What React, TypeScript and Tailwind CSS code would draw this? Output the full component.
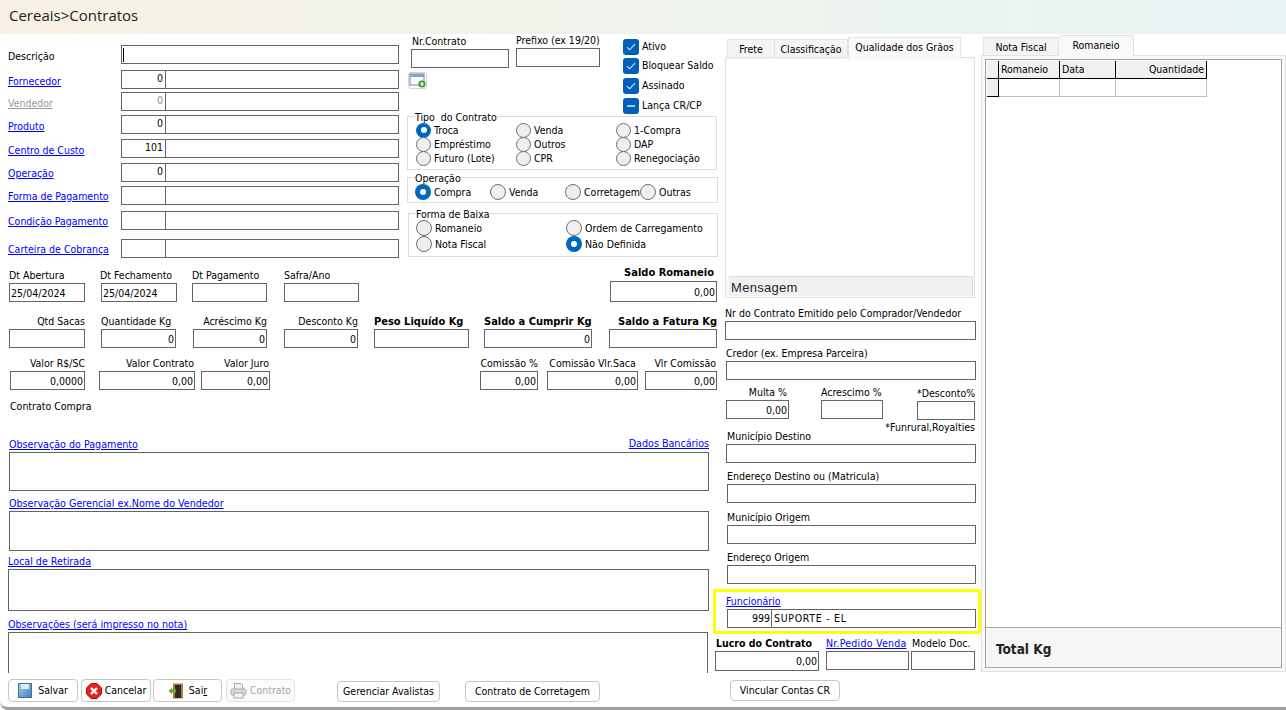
import React from "react";

const cx = (...a: (string | false | undefined)[]) => a.filter(Boolean).join(" ");
const Txt = "whitespace-nowrap";
const Bold = "font-bold text-[11px] !leading-[16px]";

function Box({ className, value, left }: { className?: string; value?: string; left?: boolean }) {
  return (
    <div className={cx("border border-[#646464] bg-white flex items-center px-[1px] leading-[14px] overflow-hidden", left ? "justify-start" : "justify-end", className)}>
      {value}
    </div>
  );
}

function Field({ label, w, value, lab, boxH = "h-[19px]", left, className, link }: { label: string; w: string; value?: string; lab?: string; boxH?: string; left?: boolean; className?: string; link?: boolean }) {
  return (
    <div className={cx("flex flex-col shrink-0", w, className)}>
      <div className={cx("h-[14px] leading-[14px] mb-[1px]", Txt, link && "text-[#0000ff] underline", lab)}>{label}</div>
      <Box className={boxH} value={value} left={left} />
    </div>
  );
}

function Lookup({ label, code, name, gray, className, labelClass }: { label: string; code?: string; name?: string; gray?: boolean; className?: string; labelClass?: string }) {
  return (
    <div className={cx("flex items-center h-[19px]", className)}>
      <div className={cx("w-[113px] shrink-0 underline", Txt, gray ? "text-[#9a9a9a]" : "text-[#0000ff]", labelClass)}>{label}</div>
      <div className="flex w-[278px] h-[19px] border border-[#646464] bg-white">
        <div className={cx("w-[44px] border-r border-[#646464] text-right pr-[2px] leading-[15px]", gray && "text-[#8a8a8a]")}>{code}</div>
        <div className="flex-1 px-[1px] leading-[15px]">{name}</div>
      </div>
    </div>
  );
}

function Radio({ on, small }: { on?: boolean; small?: boolean }) {
  const size = small ? "w-[15px] h-[15px]" : "w-[16px] h-[16px]";
  if (on)
    return (
      <span className={cx("rounded-full bg-[#0067c0] flex items-center justify-center shrink-0", size)}>
        <span className="w-[6px] h-[6px] rounded-full bg-white" />
      </span>
    );
  return <span className={cx("rounded-full bg-[#efefef] border border-[#6e6e6e] shrink-0", size)} />;
}

function RadioItem({ on, label, w, small }: { on?: boolean; label: string; w: string; small?: boolean }) {
  return (
    <div className={cx("flex items-center gap-[3px]", w)}>
      <Radio on={on} small={small} />
      <span className={cx(Txt, "pt-[2px]")}>{label}</span>
    </div>
  );
}

function Check({ label, dash, className }: { label: string; dash?: boolean; className?: string }) {
  return (
    <div className={cx("flex items-center gap-[3px] h-[16px]", className)}>
      <span className="w-[16px] h-[16px] rounded-[3px] bg-[#0060b8] flex items-center justify-center">
        {dash ? (
          <span className="w-[8px] h-[2px] bg-[#a9c9ea]" />
        ) : (
          <svg width="10" height="8" viewBox="0 0 10 8" fill="none">
            <path d="M1 4.2 L3.6 6.8 L9 1.2" stroke="#dbe9f7" strokeWidth="1.1" />
          </svg>
        )}
      </span>
      <span className={Txt}>{label}</span>
    </div>
  );
}

function Group({ title, className, children }: { title: string; className?: string; children: React.ReactNode }) {
  return (
    <fieldset className={cx("border border-[#dcdcdc] min-w-0", className)}>
      <legend className="ml-[7px] leading-[16px] h-[14px]">{title}</legend>
      {children}
    </fieldset>
  );
}

function Btn({ children, className, disabled }: { children: React.ReactNode; className?: string; disabled?: boolean }) {
  return (
    <div className={cx("border rounded-[4px] flex items-center justify-center shrink-0", Txt, disabled ? "border-[#e2e2e2] text-[#a8a8a8] bg-[#fbfbfb]" : "border-[#c6c6c6] bg-white", className)}>
      {children}
    </div>
  );
}

function ObsBlock({ label, className, boxClass, right }: { label: string; className?: string; boxClass: string; right?: string }) {
  return (
    <div className={cx("flex flex-col", className)}>
      <div className="flex justify-between h-[14px] leading-[16px] mb-[1px] text-[#0000ff] underline text-[10.65px]">
        <span className={Txt}>{label}</span>
        {right && <span className={cx(Txt, "-mt-[1px]")}>{right}</span>}
      </div>
      <div className={cx("border border-[#646464] bg-white", boxClass)} />
    </div>
  );
}

function Floppy() {
  return (
    <svg width="14" height="15" viewBox="0 0 14 15">
      <defs>
        <linearGradient id="fl" x1="0" y1="0" x2="1" y2="1">
          <stop offset="0" stopColor="#a9cdf0" />
          <stop offset="1" stopColor="#3f7fc0" />
        </linearGradient>
      </defs>
      <rect x="0.5" y="0.5" width="13" height="14" fill="url(#fl)" stroke="#3d6fa3" />
      <rect x="3" y="1" width="8" height="5" fill="#dfeaf6" />
    </svg>
  );
}

function CancelIcon() {
  return (
    <svg width="16" height="16" viewBox="0 0 16 16">
      <path d="M5 0.5 H11 L15.5 5 V11 L11 15.5 H5 L0.5 11 V5 Z" fill="#e52222" stroke="#b01010" />
      <path d="M5 5 L11 11 M11 5 L5 11" stroke="#fff" strokeWidth="2.4" />
    </svg>
  );
}

function DoorIcon() {
  return (
    <svg width="16" height="16" viewBox="0 0 16 16">
      <rect x="5" y="0.5" width="10" height="15" fill="#a9803f" />
      <rect x="7" y="2" width="6" height="13" fill="#2d2a26" />
      <path d="M0.5 8 L4 4.8 V6.6 H8 V9.4 H4 V11.2 Z" fill="#6aa531" />
    </svg>
  );
}

function PrinterIcon() {
  return (
    <svg width="17" height="17" viewBox="0 0 17 17" fill="none" stroke="#a9a9a9">
      <path d="M4.5 7 V1.5 H11 L12.5 3 V7" fill="#f2f2f2" />
      <rect x="1" y="7" width="15" height="6" rx="1.5" fill="#d9d9d9" />
      <rect x="4" y="11" width="9" height="5" fill="#f5f5f5" />
    </svg>
  );
}

function AddWindowIcon() {
  return (
    <div className="w-[19px] h-[17px] border border-[#d3d3d3] rounded-[3px] flex items-center justify-center">
      <svg width="17" height="15" viewBox="0 0 17 15">
        <rect x="1" y="1" width="14" height="11" fill="#fff" stroke="#5d87ba" />
        <rect x="1" y="1" width="14" height="3" fill="#7da6d6" />
        <circle cx="13" cy="11" r="3.6" fill="#3d9a35" />
        <path d="M13 9 V13 M11 11 H15" stroke="#fff" strokeWidth="1.2" />
      </svg>
    </div>
  );
}

const Head = "bg-[#f0f0f0] border-r border-b border-black h-[18px] leading-[17px] px-[2px]";
const Cell = "border-r border-b border-[#c0c0c0] h-[18px]";

export default function App() {
  return (
    <div className="w-[1286px] h-[710px] overflow-hidden bg-white flex flex-col font-['DejaVu_Sans_Condensed','Liberation_Sans',sans-serif] text-[10.5px] text-black">
      <header className="h-[34px] shrink-0 flex items-center pl-[9px] bg-gradient-to-r from-[#f8f2e3] to-[#e6f4f4] text-[15px] text-[#222] font-['Open_Sans',sans-serif] pb-[3px]">
        Cereais&gt;Contratos
      </header>

      <main className="flex h-[639px] shrink-0 overflow-hidden">
        {/* Left */}
        <section className="w-[720px] shrink-0 flex flex-col">
          <div className="flex h-[228px] shrink-0">
            <div className="w-[400px] shrink-0 pl-[8px] pt-[11px] flex flex-col">
              <div className="flex items-center h-[19px]">
                <div className="w-[113px] shrink-0 mt-[4px]">Descrição</div>
                <div className="w-[278px] h-[19px] border border-[#646464] flex items-center pl-[1px]">
                  <span className="w-[1px] h-[14px] bg-black" />
                </div>
              </div>
              <Lookup className="mt-[6px]" labelClass="mt-[4px]" label="Fornecedor" code="0" />
              <Lookup className="mt-[3px]" labelClass="mt-[4px]" label="Vendedor" code="0" gray />
              <Lookup className="mt-[4px]" labelClass="mt-[5px]" label="Produto" code="0" />
              <Lookup className="mt-[5px]" labelClass="mt-[4px]" label="Centro de Custo" code="101" />
              <Lookup className="mt-[5px]" labelClass="mt-[2px]" label="Operação" code="0" />
              <Lookup className="mt-[4px]" labelClass="mt-[2px]" label="Forma de Pagamento" />
              <Lookup className="mt-[6px]" labelClass="mt-[2px]" label="Condição Pagamento" />
              <Lookup className="mt-[9px]" labelClass="mt-[2px]" label="Carteira de Cobrança" />
            </div>

            <div className="flex-1 flex flex-col">
              <div className="flex h-[75px] shrink-0">
                <div className="w-[223px] shrink-0 flex flex-col">
                  <div className="flex">
                    <div className="flex flex-col ml-[11px] w-[98px]">
                      <div className="h-[14px] leading-[14px] mb-[1px] ml-[1px]">Nr.Contrato</div>
                      <div className="h-[19px] border border-[#646464]" />
                    </div>
                    <div className="flex flex-col ml-[7px] w-[84px] -mt-[1px]">
                      <div className={cx("h-[14px] leading-[14px] mb-[1px]", Txt)}>Prefixo (ex 19/20)</div>
                      <div className="h-[19px] border border-[#646464]" />
                    </div>
                  </div>
                  <div className="ml-[8px] mt-[4px]">
                    <AddWindowIcon />
                  </div>
                </div>
                <div className="flex flex-col pt-[5px]">
                  <Check label="Ativo" />
                  <Check className="mt-[3px]" label="Bloquear Saldo" />
                  <Check className="mt-[4px]" label="Assinado" />
                  <Check className="mt-[4px]" label="Lança CR/CP" dash />
                </div>
              </div>

              <Group title="Tipo  do Contrato" className="ml-[7px] w-[310px] h-[61px] whitespace-pre">
                <div className="grid grid-cols-[100px_100px_100px] pl-[8px] auto-rows-[14px] items-center">
                  <RadioItem on label="Troca" w="" small />
                  <RadioItem label="Venda" w="" small />
                  <RadioItem label="1-Compra" w="" small />
                  <RadioItem label="Empréstimo" w="" small />
                  <RadioItem label="Outros" w="" small />
                  <RadioItem label="DAP" w="" small />
                  <RadioItem label="Futuro (Lote)" w="" small />
                  <RadioItem label="CPR" w="" small />
                  <RadioItem label="Renegociação" w="" small />
                </div>
              </Group>
              <Group title="Operação" className="ml-[7px] w-[311px] h-[33px]">
                <div className="flex pl-[7px] h-[16px]">
                  <RadioItem on label="Compra" w="w-[75px]" />
                  <RadioItem label="Venda" w="w-[75px]" />
                  <RadioItem label="Corretagem" w="w-[75px]" />
                  <RadioItem label="Outras" w="" />
                </div>
              </Group>
              <Group title="Forma de Baixa" className="ml-[8px] mt-[3px] w-[310px] h-[51px]">
                <div className="grid grid-cols-[150px_150px] pl-[7px] auto-rows-[16px]">
                  <RadioItem label="Romaneio" w="" />
                  <RadioItem label="Ordem de Carregamento" w="" />
                  <RadioItem label="Nota Fiscal" w="" />
                  <RadioItem on label="Não Definida" w="" />
                </div>
              </Group>
            </div>
          </div>

          <div className="flex items-end mt-[3px] h-[37px] shrink-0">
            <Field className="ml-[9px]" label="Dt Abertura" w="w-[76px]" value="25/04/2024" left />
            <Field className="ml-[16px]" label="Dt Fechamento" w="w-[76px]" value="25/04/2024" left lab="-ml-[1px]" />
            <Field className="ml-[15px]" label="Dt Pagamento" w="w-[75px]" />
            <Field className="ml-[17px]" label="Safra/Ano" w="w-[75px]" />
            <div className="flex flex-col ml-[251px] w-[107px]">
              <div className={cx("h-[14px] mb-[2px] text-right pr-[3px]", Bold)}>Saldo Romaneio</div>
              <Box className="h-[21px]" value="0,00" />
            </div>
          </div>

          <div className="flex items-end mt-[12px] shrink-0">
            <Field className="ml-[9px]" label="Qtd Sacas" w="w-[76px]" lab="text-right" />
            <Field className="ml-[16px]" label="Quantidade Kg" w="w-[75px]" value="0" />
            <Field className="ml-[17px]" label="Acréscimo Kg" w="w-[74px]" value="0" lab="text-right" />
            <Field className="ml-[17px]" label="Desconto Kg" w="w-[74px]" value="0" lab="text-right" />
            <Field className="ml-[16px]" label="Peso Liquído Kg" w="w-[95px]" lab={Bold} />
            <Field className="ml-[15px]" label="Saldo a Cumprir Kg" w="w-[108px]" value="0" lab={Bold} />
            <Field className="ml-[17px]" label="Saldo a Fatura Kg" w="w-[108px]" lab={cx(Bold, "text-right")} />
          </div>

          <div className="flex items-end mt-[8px] shrink-0">
            <Field className="ml-[10px]" label="Valor R$/SC" w="w-[75px]" value="0,0000" lab="text-right" />
            <Field className="ml-[14px]" label="Valor Contrato" w="w-[96px]" value="0,00" lab="text-right pr-[1px]" />
            <Field className="ml-[6px]" label="Valor Juro" w="w-[69px]" value="0,00" lab="text-right pr-[1px]" />
            <Field className="ml-[210px]" label="Comissão %" w="w-[58px]" value="0,00" lab="text-right" />
            <Field className="ml-[9px]" label="Comissão Vlr.Saca" w="w-[91px]" value="0,00" lab="text-center" />
            <Field className="ml-[7px]" label="Vlr Comissão" w="w-[72px]" value="0,00" lab="text-right pr-[1px]" />
          </div>

          <div className="ml-[10px] mt-[9px] h-[14px] leading-[14px]">Contrato Compra</div>

          <ObsBlock className="ml-[9px] w-[700px] mt-[24px]" label="Observação do Pagamento" right="Dados Bancários" boxClass="h-[39px]" />
          <ObsBlock className="ml-[9px] w-[700px] mt-[5px]" label="Observação Gerencial ex.Nome do Vendedor" boxClass="h-[40px]" />
          <ObsBlock className="ml-[8px] w-[701px] mt-[3px]" label="Local de Retirada" boxClass="h-[42px]" />
          <ObsBlock className="ml-[8px] w-[700px] mt-[6px]" label="Observações (será impresso no nota)" boxClass="h-[41px] border-b-0" />
        </section>

        {/* Middle */}
        <section className="w-[261px] shrink-0 flex flex-col pt-[3px]">
          <div className="flex items-end h-[21px] ml-[7px] shrink-0">
            <div className="relative h-[18px] w-[48px] mb-[1px] bg-[#f4f4f4] border border-[#e2e2e2] border-b-0 text-center leading-[18px]">Frete</div>
            <div className="relative h-[18px] w-[73px] mb-[1px] bg-[#f4f4f4] border-t border-r border-[#e2e2e2] text-center leading-[18px]">Classificação</div>
            <div className="relative z-10 h-[21px] w-[113px] bg-[#f9f9f9] border border-[#e2e2e2] border-b-0 text-center leading-[18px]">Qualidade dos Grãos</div>
          </div>
          <div className="ml-[5px] w-[250px] h-[241px] -mt-[1px] shrink-0 border border-[#e2e2e2] bg-[#f9f9f9] px-[1px] pt-[2px] flex flex-col">
            <div className="h-[216px] bg-white shrink-0" />
            <div className="h-[20px] ml-[2px] bg-[#f0f0f0] border-t border-r border-[#dcdcdc] text-[13px] leading-[22px] pl-[2px] text-[#1d2733] overflow-hidden font-['Liberation_Sans',sans-serif] tracking-[0.3px]">Mensagem</div>
          </div>

          <Field className="ml-[5px] mt-[8px]" label="Nr do Contrato Emitido pelo Comprador/Vendedor" w="w-[251px]" />
          <Field className="ml-[6px] mt-[6px]" label="Credor (ex. Empresa Parceira)" w="w-[250px]" />
          <div className="flex items-start mt-[5px] ml-[6px] shrink-0">
            <Field label="Multa %" w="w-[63px]" value="0,00" lab="text-right pr-[2px]" />
            <Field className="ml-[32px]" label="Acrescimo %" w="w-[62px]" />
            <Field className="ml-[34px] mt-[1px]" label="*Desconto%" w="w-[58px]" lab="text-right pr-[1px]" />
          </div>
          <div className="h-[9px] ml-[6px] w-[249px] text-right leading-[14px] shrink-0">*Funrural,Royalties</div>
          <Field className="ml-[6px]" label="Município Destino" w="w-[250px]" lab="pl-[1px]" />
          <Field className="ml-[7px] mt-[6px]" label="Endereço Destino ou (Matricula)" w="w-[249px]" />
          <Field className="ml-[7px] mt-[7px]" label="Município Origem" w="w-[249px]" />
          <Field className="ml-[7px] mt-[6px]" label="Endereço Origem" w="w-[249px]" />

          <div className="-ml-[7px] mt-[5px] w-[268px] h-[45px] shrink-0 border-[3px] border-[#ffff00] rounded-[2px] pl-[11px] pt-[2px]">
            <div className="-ml-[1px] h-[14px] leading-[14px] mb-[1px] text-[#0000ff] underline">Funcionário</div>
            <div className="flex w-[249px] h-[19px] border border-[#646464]">
              <div className="w-[44px] border-r border-[#646464] text-right pr-[1px] leading-[17px]">999</div>
              <div className="pl-[2px] leading-[17px] tracking-[0.7px]">SUPORTE - EL</div>
            </div>
          </div>

          <div className="flex items-start mt-[2px] -ml-[5px] shrink-0">
            <Field label="Lucro do Contrato" w="w-[104px]" value="0,00" boxH="h-[20px]" lab="font-bold pl-[1px]" />
            <Field className="ml-[7px]" label="Nr.Pedido Venda" w="w-[83px]" link lab="tracking-[0.25px]" />
            <Field className="ml-[2px]" label="Modelo Doc." w="w-[64px]" lab="pl-[1px]" />
          </div>
        </section>

        {/* Right */}
        <section className="w-[305px] shrink-0 flex flex-col pt-[1px]">
          <div className="flex items-end h-[21px] ml-[2px] shrink-0">
            <div className="h-[18px] w-[76px] mb-[1px] bg-[#f4f4f4] border border-[#e2e2e2] border-b-0 text-center leading-[18px]">Nota Fiscal</div>
            <div className="relative z-10 h-[21px] w-[75px] bg-[#f9f9f9] border-t border-r border-[#e2e2e2] text-center leading-[18px]">Romaneio</div>
          </div>
          <div className="-mt-[1px] h-[617px] w-[305px] shrink-0 border border-[#e2e2e2] bg-[#f9f9f9] pl-[3px] pr-[3px] pt-[3px] pb-[3px]">
            <div className="h-[609px] border border-b-0 border-[#a0a0a0] bg-white flex flex-col">
              <div className="flex-1 pt-[1px] pl-[1px]">
                <div className="grid grid-cols-[12px_61px_56px_91px] w-[220px]">
                  <div className={Head} />
                  <div className={Head}>Romaneio</div>
                  <div className={Head}>Data</div>
                  <div className={cx(Head, "text-right")}>Quantidade</div>
                  <div className={Head} />
                  <div className={Cell} />
                  <div className={Cell} />
                  <div className={Cell} />
                </div>
              </div>
              <div className="h-[41px] shrink-0 border-t border-b border-[#a8a8a8] bg-[#f6f6f6] flex items-center pl-[10px] pt-[4px] text-[13.5px] font-bold text-[#222]">Total Kg</div>
            </div>
          </div>
        </section>
      </main>

      <footer className="h-[37px] shrink-0 border-b-[3px] border-[#a0a0a0] rounded-bl-[8px] flex items-start pt-[6px]">
        <Btn className="ml-[8px] w-[70px] h-[23px] gap-[6px]"><Floppy />Salvar</Btn>
        <Btn className="ml-[3px] w-[70px] h-[23px] gap-[3px]"><CancelIcon />Cancelar</Btn>
        <Btn className="ml-[2px] w-[69px] h-[23px] gap-[5px]"><DoorIcon /><span>Sai<span className="underline">r</span></span></Btn>
        <Btn disabled className="ml-[4px] w-[69px] h-[23px] gap-[3px]"><PrinterIcon />Contrato</Btn>
        <Btn className="ml-[42px] w-[103px] h-[21px] mt-[2px]">Gerenciar Avalistas</Btn>
        <Btn className="ml-[25px] w-[135px] h-[21px] mt-[2px]">Contrato de Corretagem</Btn>
        <Btn className="ml-[130px] w-[110px] h-[21px] mt-[1px]">Vincular Contas CR</Btn>
      </footer>
    </div>
  );
}
